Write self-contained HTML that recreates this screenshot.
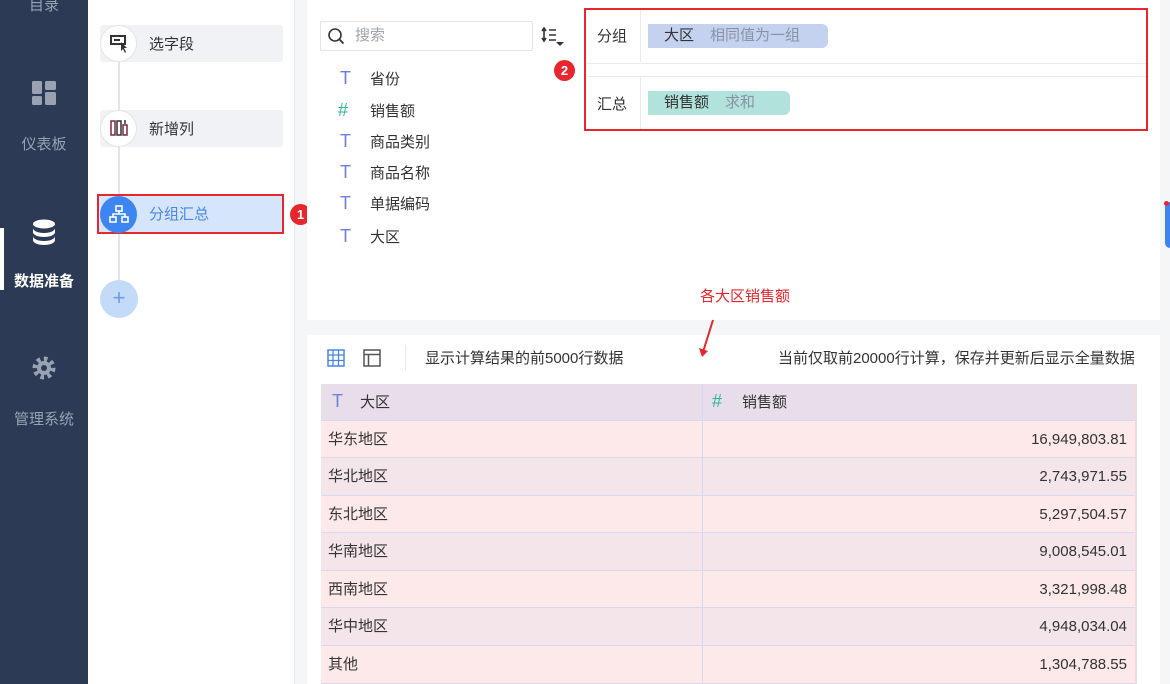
<!DOCTYPE html>
<html><head><meta charset="utf-8"><style>
*{margin:0;padding:0;box-sizing:border-box}
body{width:1170px;height:684px;overflow:hidden;position:relative;font-family:"Liberation Sans","Noto Sans CJK SC",sans-serif;font-size:15px;line-height:20px;color:#333;background:#f5f6f8}
.a{position:absolute}
.side{left:0;top:0;width:88px;height:684px;background:#2c3a55}
.nav{width:88px;text-align:center;color:#98a2b3;font-size:15px}
.mid{left:88px;top:0;width:207px;height:684px;background:#fff;border-right:1px solid #e8eaee}
.step{left:100px;width:183px;height:37px;background:#f1f2f5;border-radius:3px}
.circ{width:37px;height:37px;border-radius:50%;background:#fff;border:1px solid #e3e5ea}
.pill{height:24px;border-radius:0 6px 6px 0;font-size:15px;line-height:24px;padding-left:16px}
.row{left:321px;width:814px;height:38px;border-bottom:1px solid #d8d9ee}
.row span{position:absolute;top:9px;line-height:20px}
</style></head><body>
<div class="a side"></div>
<div class="a nav" style="top:-4px;left:0">目录</div>
<svg class="a" style="left:32px;top:81px" width="24" height="24"><rect x="0" y="0" width="10" height="13" rx="1.5" fill="#98a2b3"/><rect x="13" y="0" width="11" height="9" rx="1.5" fill="#98a2b3"/><rect x="0" y="15" width="10" height="9" rx="1.5" fill="#98a2b3"/><rect x="13" y="11" width="11" height="13" rx="1.5" fill="#98a2b3"/></svg>
<div class="a nav" style="top:135px;left:0">仪表板</div>
<div class="a" style="left:0;top:228px;width:4px;height:62px;background:#fff"></div>
<svg class="a" style="left:32px;top:219px" width="24" height="26"><ellipse cx="12" cy="5" rx="11" ry="4.5" fill="#fff"/><path d="M1 9c0 3 5 5 11 5s11-2 11-5v4c0 3-5 5-11 5S1 16 1 13z" fill="#fff"/><path d="M1 17c0 3 5 5 11 5s11-2 11-5v4c0 3-5 5-11 5S1 24 1 21z" fill="#fff"/></svg>
<div class="a nav" style="top:272px;left:0;color:#fff;font-weight:bold">数据准备</div>
<svg class="a" style="left:31px;top:355px" width="26" height="26" viewBox="0 0 26 26"><circle cx="13" cy="13" r="9" fill="none" stroke="#98a2b3" stroke-width="5" stroke-dasharray="3.5 3.5"/><circle cx="13" cy="13" r="7" fill="#98a2b3"/><circle cx="13" cy="13" r="3" fill="#2c3a55"/></svg>
<div class="a nav" style="top:410px;left:0">管理系统</div>

<div class="a mid"></div>
<div class="a" style="left:118px;top:44px;width:2px;height:260px;background:#e3e5ea"></div>
<div class="a step" style="top:25px"></div>
<div class="a circ" style="left:100px;top:25px"></div>
<svg class="a" style="left:110px;top:35px" width="20" height="18"><rect x="1" y="1" width="14" height="8" fill="none" stroke="#333" stroke-width="2"/><rect x="4" y="4" width="6" height="2" fill="#333"/><path d="M11 7l6 6-3 0 2 4-1 1-2-4-2 2z" fill="#333"/></svg>
<div class="a" style="left:149px;top:35px">选字段</div>
<div class="a step" style="top:110px"></div>
<div class="a circ" style="left:100px;top:110px"></div>
<svg class="a" style="left:110px;top:119px" width="20" height="18"><rect x="1" y="2" width="4" height="14" fill="none" stroke="#7a2b3b" stroke-width="1.5"/><rect x="7" y="2" width="4" height="14" fill="none" stroke="#333" stroke-width="1.5"/><rect x="13" y="6" width="4" height="10" fill="none" stroke="#7a2b3b" stroke-width="1.5"/><path d="M15 1v4" stroke="#333" stroke-width="1.5"/></svg>
<div class="a" style="left:149px;top:120px">新增列</div>
<div class="a" style="left:97px;top:194px;width:187px;height:40px;background:#d5e5fc;border:2px solid #e8262e"></div>
<div class="a" style="left:100px;top:196px;width:37px;height:37px;border-radius:50%;background:#3d86f2"></div>
<svg class="a" style="left:109px;top:205px" width="20" height="18"><rect x="7" y="1" width="6" height="5" fill="none" stroke="#fff" stroke-width="1.6"/><rect x="1" y="12" width="6" height="5" fill="none" stroke="#fff" stroke-width="1.6"/><rect x="13" y="12" width="6" height="5" fill="none" stroke="#fff" stroke-width="1.6"/><path d="M10 6v3M4 12V9h12v3" fill="none" stroke="#fff" stroke-width="1.6"/></svg>
<div class="a" style="left:149px;top:205px;color:#4a86e8">分组汇总</div>
<div class="a" style="left:290px;top:204px;width:21px;height:21px;border-radius:50%;background:#e8262e;color:#fff;text-align:center;font-size:13px;line-height:21px;font-weight:bold">1</div>
<div class="a" style="left:100px;top:280px;width:38px;height:38px;border-radius:50%;background:#c3daf9;color:#6b9de8;text-align:center;font-size:22px;line-height:36px">+</div>

<div class="a" style="left:307px;top:0;width:853px;height:320px;background:#fff"></div>
<div class="a" style="left:320px;top:21px;width:213px;height:30px;border:1px solid #e3e5ea;border-radius:2px"></div>
<svg class="a" style="left:327px;top:27px" width="18" height="18"><circle cx="8" cy="8" r="6" fill="none" stroke="#333" stroke-width="1.6"/><path d="M12.5 12.5l4 4" stroke="#333" stroke-width="1.8"/></svg>
<div class="a" style="left:355px;top:26px;color:#a0a4ad">搜索</div>
<svg class="a" style="left:541px;top:27px" width="26" height="22"><path d="M3 1v13M1 4l2-3 2 3M1 11l2 3 2-3" fill="none" stroke="#333" stroke-width="1.6"/><path d="M8 3h7M8 8h7M8 13h7" stroke="#333" stroke-width="1.6"/><path d="M15 15h8l-4 4z" fill="#333"/></svg>
<div class="a" style="left:554px;top:60px;width:21px;height:21px;border-radius:50%;background:#e8262e;color:#fff;text-align:center;font-size:13px;line-height:21px;font-weight:bold">2</div>
<div class="a" style="left:340px;top:68px;font-size:18px;color:#6e7fe0">T</div><div class="a" style="left:370px;top:70px">省份</div>
<div class="a" style="left:338px;top:100px;font-size:18px;color:#2cb59f">#</div><div class="a" style="left:370px;top:102px">销售额</div>
<div class="a" style="left:340px;top:131px;font-size:18px;color:#6e7fe0">T</div><div class="a" style="left:370px;top:133px">商品类别</div>
<div class="a" style="left:340px;top:162px;font-size:18px;color:#6e7fe0">T</div><div class="a" style="left:370px;top:164px">商品名称</div>
<div class="a" style="left:340px;top:193px;font-size:18px;color:#6e7fe0">T</div><div class="a" style="left:370px;top:195px">单据编码</div>
<div class="a" style="left:340px;top:226px;font-size:18px;color:#6e7fe0">T</div><div class="a" style="left:370px;top:228px">大区</div>

<div class="a" style="left:584px;top:8px;width:564px;height:123px;border:2px solid #e8262e"></div>
<div class="a" style="left:586px;top:63px;width:560px;height:1px;background:#e8eaee"></div>
<div class="a" style="left:586px;top:76px;width:560px;height:1px;background:#e8eaee"></div>
<div class="a" style="left:640px;top:10px;width:1px;height:52px;background:#e8eaee"></div>
<div class="a" style="left:640px;top:77px;width:1px;height:52px;background:#e8eaee"></div>
<div class="a" style="left:597px;top:27px">分组</div>
<div class="a" style="left:597px;top:95px">汇总</div>
<div class="a pill" style="left:648px;top:24px;width:180px;background:#c4d2ef"><span style="color:#333">大区</span><span style="color:#8a93a6;margin-left:16px">相同值为一组</span></div>
<div class="a pill" style="left:648px;top:91px;width:142px;background:#b1e2dc"><span style="color:#333">销售额</span><span style="color:#8a93a6;margin-left:16px">求和</span></div>
<div class="a" style="left:1165px;top:202px;width:5px;height:46px;border-radius:23px 0 0 23px;background:#3d86f2"></div>
<div class="a" style="left:1164px;top:201px;width:5px;height:5px;border-radius:50%;background:#e8262e"></div>

<div class="a" style="left:700px;top:287px;color:#e8262e">各大区销售额</div>

<div class="a" style="left:307px;top:335px;width:853px;height:349px;background:#fff"></div>
<svg class="a" style="left:696px;top:318px" width="22" height="42"><path d="M17 2L7 34" stroke="#e8262e" stroke-width="2"/><path d="M3 30l3 9 6-6z" fill="#e8262e"/></svg>
<svg class="a" style="left:327px;top:349px" width="18" height="18"><rect x="1" y="1" width="16" height="16" fill="none" stroke="#4a86e8" stroke-width="1.5"/><path d="M1 6h16M1 11.5h16M6 1v16M11.5 1v16" stroke="#4a86e8" stroke-width="1.3"/></svg>
<svg class="a" style="left:363px;top:349px" width="18" height="18"><rect x="1" y="1" width="16" height="16" fill="none" stroke="#555" stroke-width="1.5"/><path d="M1 5.5h16M5.5 5.5v12" stroke="#555" stroke-width="1.5"/></svg>
<div class="a" style="left:405px;top:345px;width:1px;height:26px;background:#e8eaee"></div>
<div class="a" style="left:425px;top:349px">显示计算结果的前5000行数据</div>
<div class="a" style="left:778px;top:349px">当前仅取前20000行计算，保存并更新后显示全量数据</div>

<div class="a" style="left:321px;top:384px;width:814px;height:300px;background:#fde9ea"></div>
<div class="a row" style="top:384px;height:37px;background:#e8dee9"><span style="left:11px;top:7px;font-size:18px;color:#6e7fe0">T</span><span style="left:39px">大区</span><span style="left:391px;top:7px;font-size:18px;color:#2cb59f">#</span><span style="left:421px">销售额</span></div>
<div class="a row" style="top:421px;height:37px"><span style="left:7px">华东地区</span><span style="right:8px">16,949,803.81</span></div>
<div class="a row" style="top:458px;background:#f3e5e9"><span style="left:7px">华北地区</span><span style="right:8px">2,743,971.55</span></div>
<div class="a row" style="top:496px;height:37px"><span style="left:7px">东北地区</span><span style="right:8px">5,297,504.57</span></div>
<div class="a row" style="top:533px;background:#f3e5e9"><span style="left:7px">华南地区</span><span style="right:8px">9,008,545.01</span></div>
<div class="a row" style="top:571px;height:37px"><span style="left:7px">西南地区</span><span style="right:8px">3,321,998.48</span></div>
<div class="a row" style="top:608px;background:#f3e5e9"><span style="left:7px">华中地区</span><span style="right:8px">4,948,034.04</span></div>
<div class="a row" style="top:646px"><span style="left:7px">其他</span><span style="right:8px">1,304,788.55</span></div>
<div class="a" style="left:702px;top:384px;width:1px;height:300px;background:#d8d9ee"></div>
<div class="a" style="left:1135px;top:384px;width:2px;height:300px;background:#f6d8da"></div>
</body></html>
